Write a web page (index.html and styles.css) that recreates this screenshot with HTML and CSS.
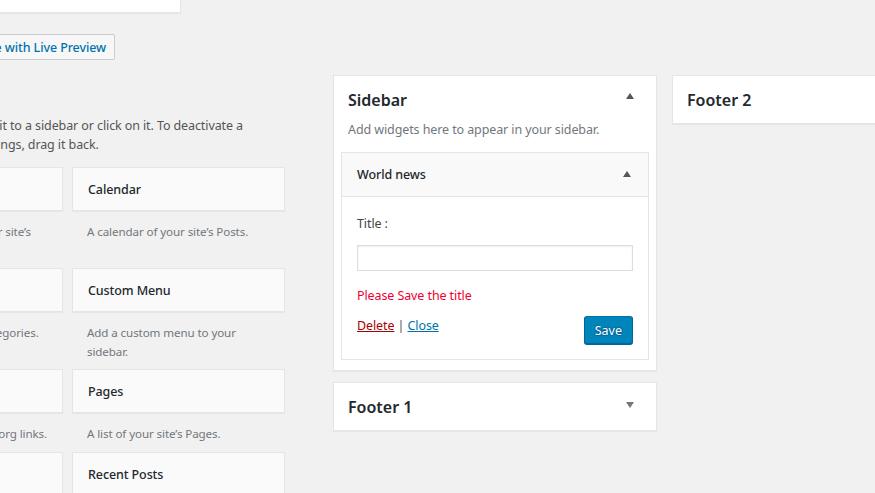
FILE: index.html
```html
<!DOCTYPE html>
<html lang="en">
<head>
<meta charset="utf-8">
<title>Widgets</title>
<link rel="stylesheet" href="styles.css">
</head>
<body>
<div class="page">
  <div class="available">
    <div class="top-box"></div>
    <div class="toolbar">
      <a class="live-btn" href="#">Manage with Live Preview</a>
    </div>
    <p class="intro">To activate a widget drag it to a sidebar or click on it. To deactivate a<br>widget and delete its settings, drag it back.</p>
    <div class="widget-grid">
      <div class="widget-item">
        <div class="widget-top"><h3>Archives</h3></div>
        <div class="widget-description">A monthly archive of your site’s<br>Posts.</div>
      </div>
      <div class="widget-item">
        <div class="widget-top"><h3>Calendar</h3></div>
        <div class="widget-description">A calendar of your site’s Posts.</div>
      </div>
      <div class="widget-item">
        <div class="widget-top"><h3>Categories</h3></div>
        <div class="widget-description">A list or dropdown of categories.</div>
      </div>
      <div class="widget-item">
        <div class="widget-top"><h3>Custom Menu</h3></div>
        <div class="widget-description">Add a custom menu to your<br>sidebar.</div>
      </div>
      <div class="widget-item single">
        <div class="widget-top"><h3>Meta</h3></div>
        <div class="widget-description">Login, RSS, &amp; WordPress.org links.</div>
      </div>
      <div class="widget-item single">
        <div class="widget-top"><h3>Pages</h3></div>
        <div class="widget-description">A list of your site’s Pages.</div>
      </div>
      <div class="widget-item">
        <div class="widget-top"><h3>Recent Comments</h3></div>
        <div class="widget-description">Your site’s most recent comments.</div>
      </div>
      <div class="widget-item">
        <div class="widget-top"><h3>Recent Posts</h3></div>
        <div class="widget-description">Your site’s most recent Posts.</div>
      </div>
    </div>
  </div>

  <div class="sidebars">
    <div class="sidebar-panel">
      <div class="sidebar-name">
        <h2>Sidebar</h2>
        <span class="arrow up"></span>
      </div>
      <p class="sidebar-desc">Add widgets here to appear in your sidebar.</p>
      <div class="widget open">
        <div class="widget-head">
          <h3>World news</h3>
          <span class="arrow up small"></span>
        </div>
        <div class="widget-inside">
          <label class="field-label" for="title">Title :</label>
          <input class="field-input" id="title" type="text">
          <p class="notice">Please Save the title</p>
          <div class="widget-actions">
            <div class="links"><a class="delete" href="#">Delete</a> | <a class="close" href="#">Close</a></div>
            <button class="save-btn" type="button">Save</button>
          </div>
        </div>
      </div>
    </div>
    <div class="sidebar-panel closed">
      <div class="sidebar-name">
        <h2>Footer 1</h2>
        <span class="arrow down"></span>
      </div>
    </div>
  </div>

  <div class="sidebars second">
    <div class="sidebar-panel closed">
      <div class="sidebar-name">
        <h2>Footer 2</h2>
      </div>
    </div>
  </div>
</div>
</body>
</html>
```

FILE: styles.css
```css
html, body {
  margin: 0;
  padding: 0;
  background: #f1f1f1;
  overflow: hidden;
  width: 875px;
  height: 493px;
}

body {
  font-family: "Noto Sans", "Open Sans", sans-serif;
  font-size: 12.5px;
  letter-spacing: -0.1px;
  color: #444;
}

.page {
  display: flex;
  align-items: flex-start;
  width: 1200px;
  margin-left: -150px;
}

/* ---------- available widgets column ---------- */
.available {
  width: 435px;
  flex: none;
}

.top-box {
  width: 329px;
  height: 39px;
  margin-top: -28px;
  background: #fff;
  border: 1px solid #e5e5e5;
  box-shadow: 0 1px 1px rgba(0, 0, 0, 0.04);
}

.toolbar {
  width: 265px;
  display: flex;
  justify-content: flex-end;
  margin-top: 21px;
}

.live-btn {
  display: inline-flex;
  align-items: center;
  height: 24px;
  padding: 0 8px;
  border: 1px solid #ccc;
  border-radius: 2px;
  background: #f7f7f7;
  color: #0073aa;
  font-weight: 500;
  text-decoration: none;
}

.intro {
  margin: 56px 0 0;
  padding-left: 2px;
  line-height: 19px;
  color: #555;
}

.widget-grid {
  display: grid;
  grid-template-columns: 213px 213px;
  column-gap: 9px;
  margin-top: 13px;
}

.widget-item {
  margin-bottom: 8px;
}

.widget-item.single {
  margin-bottom: 9px;
}

.widget-top {
  height: 42px;
  display: flex;
  align-items: center;
  padding: 0 15px;
  background: #fafafa;
  border: 1px solid #e5e5e5;
  box-shadow: 0 1px 1px rgba(0, 0, 0, 0.04);
}

.widget-top h3,
.widget-head h3 {
  margin: 0;
  font-size: 12.5px;
  font-weight: 500;
  color: #23282d;
}

.widget-description {
  padding: 11px 15px 0;
  font-size: 11.6px;
  line-height: 19px;
  color: #72777c;
}

/* ---------- sidebars ---------- */
.sidebars {
  width: 324px;
  flex: none;
  margin-top: 75px;
  margin-left: 48px;
}

.sidebars.second {
  margin-left: 15px;
  width: 260px;
}

.sidebar-panel {
  background: #fff;
  border: 1px solid #e5e5e5;
  box-shadow: 0 1px 1px rgba(0, 0, 0, 0.04);
  padding-bottom: 10px;
  margin-bottom: 11px;
}

.sidebar-panel.closed {
  padding-bottom: 10px;
}

.sidebar-name {
  position: relative;
  padding: 12px 14px 0;
}

.sidebar-name h2 {
  margin: 0;
  font-size: 16px;
  line-height: 25px;
  font-weight: 600;
  letter-spacing: 0;
  color: #23282d;
}

.arrow {
  position: absolute;
  width: 0;
  height: 0;
  border-left: 4px solid transparent;
  border-right: 4px solid transparent;
}

.arrow.up {
  border-bottom: 6px solid #50575e;
}

.arrow.down {
  border-top: 6px solid #72777c;
}

.sidebar-name .arrow {
  right: 22px;
  top: 17px;
}

.sidebar-name .arrow.down {
  top: 19px;
}

.sidebar-desc {
  margin: 7px 14px 0;
  line-height: 19px;
  color: #72777c;
}

.widget {
  margin: 13px 7px 0;
  border: 1px solid #e5e5e5;
}

.widget-head {
  position: relative;
  height: 43px;
  display: flex;
  align-items: center;
  padding: 0 15px;
  background: #f9f9f9;
  border-bottom: 1px solid #e5e5e5;
}

.widget-head .arrow {
  right: 17px;
  top: 18px;
}

.widget-inside {
  padding: 17px 15px 15px;
  display: flex;
  flex-direction: column;
  align-items: stretch;
}

.field-label {
  line-height: 19px;
  color: #444;
}

.field-input {
  margin: 12px 0 0;
  height: 26px;
  box-sizing: border-box;
  border: 1px solid #ddd;
  box-shadow: inset 0 1px 2px rgba(0, 0, 0, 0.07);
  background: #fff;
  font: inherit;
  padding: 0 6px;
}

.notice {
  margin: 15px 0 0;
  line-height: 19px;
  color: #f00030;
}

.widget-actions {
  display: flex;
  justify-content: space-between;
  align-items: flex-start;
  margin-top: 11px;
}

.links {
  line-height: 19px;
  color: #555;
}

.links .delete {
  color: #a00;
}

.links .close {
  color: #0073aa;
}

.save-btn {
  margin-top: 0;
  height: 28px;
  padding: 0 10px;
  border: 1px solid;
  border-color: #0073aa #006799 #006799;
  border-radius: 3px;
  background: #0085ba;
  box-shadow: 0 1px 0 #006799;
  color: #fff;
  font: inherit;
  text-shadow: 0 -1px 1px #006799, 1px 0 1px #006799, 0 1px 1px #006799, -1px 0 1px #006799;
}
```
